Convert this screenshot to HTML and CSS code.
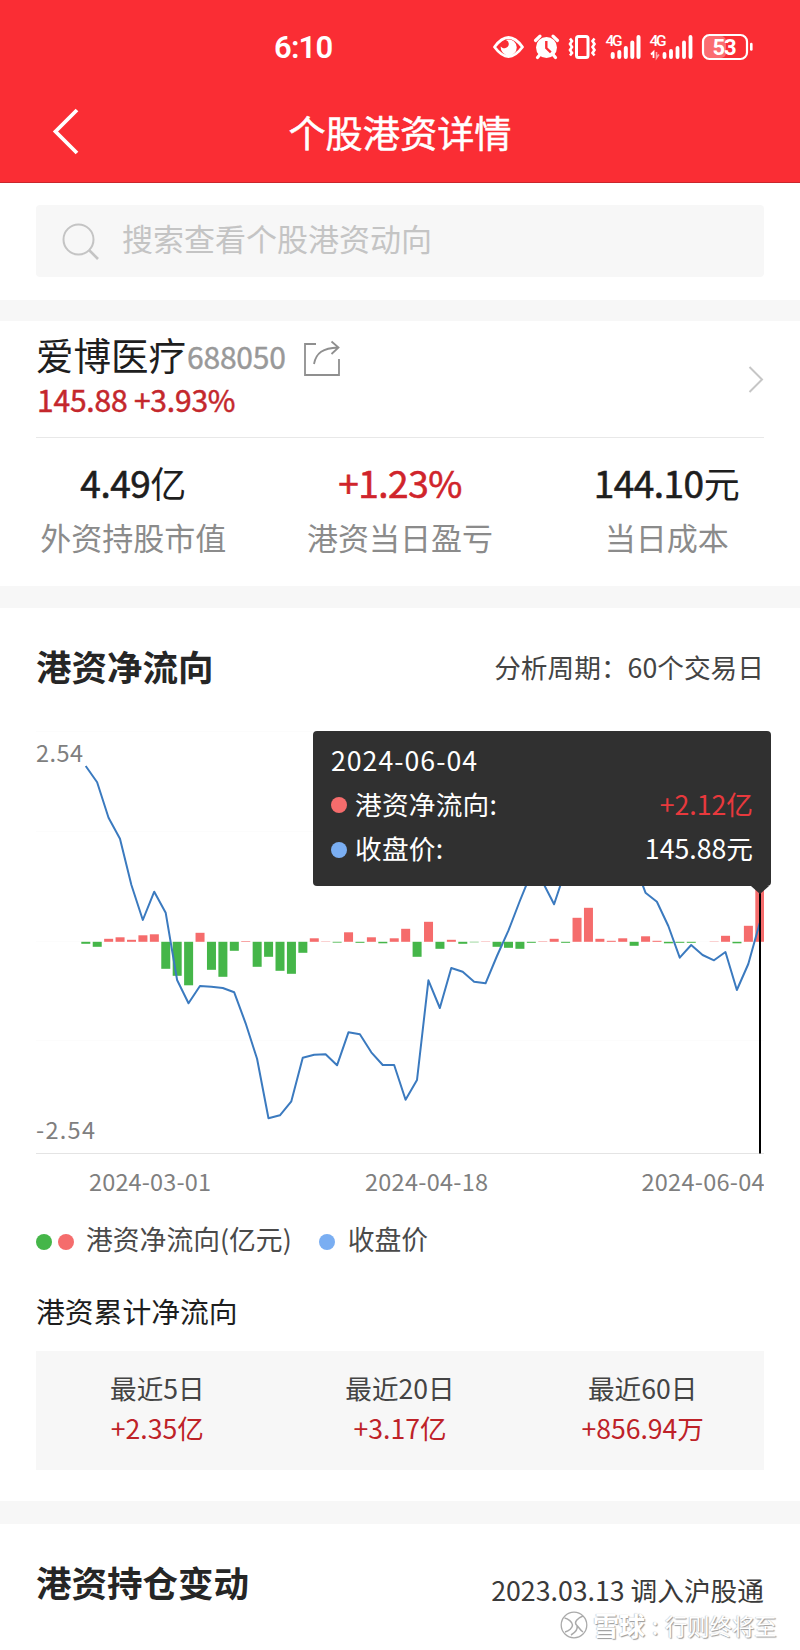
FILE: index.html
```html
<!DOCTYPE html>
<html lang="zh-CN">
<head>
<meta charset="utf-8">
<title>个股港资详情</title>
<link rel="stylesheet" href="styles.css">
</head>
<body>
<header class="header">
  <div class="status">
    <span class="clock">6:10</span>
    <svg class="status-icons" width="262" height="30" viewBox="492 32 262 30">
      <path d="M494.500 47 Q508.500 28 522.500 47 Q508.500 66 494.500 47Z" fill="none" stroke="#fff" stroke-width="2.800" stroke-linejoin="round"/>
      <path d="M508 39.500 A8 8 0 1 1 500.800 46.500 A4.500 4.500 0 0 0 508.500 45.500 A4.500 4.500 0 0 0 506 40Z" fill="#fff"/>
      <circle cx="546.500" cy="47.500" r="10.500" fill="#fff"/>
      <path d="M535.500 40.500 l4.500-4.300 M553 36.200 l4.500 4.300 M540.500 54 l-3 3.500 M552.500 54 l3 3.500" stroke="#fff" stroke-width="3.200" stroke-linecap="round"/>
      <path d="M546.300 41 v7 l4.500 4.300" fill="none" stroke="#fa2d34" stroke-width="2.400"/>
      <rect x="576.500" y="36.500" width="11.500" height="21" rx="2" fill="none" stroke="#fff" stroke-width="3"/>
      <path d="M570 38.500 l2 2.500 -2 3 2 3 -2 3 2 3 -2 2.500 M594.500 38.500 l-2 2.500 2 3 -2 3 2 3 -2 3 2 2.500" fill="none" stroke="#fff" stroke-width="2.600"/>
      <text class="net" x="605.500" y="46" textLength="17">4G</text>
      <path d="M612.700 57V54 M619.300 57V52 M625.800 57V48 M632.300 57V42.500 M638.500 57V37" stroke="#fff" stroke-width="4" stroke-linecap="round"/>
      <text class="net" x="649.500" y="46" textLength="17">4G</text>
      <path d="M651 54.500 l2.500-2.500 v6" fill="none" stroke="#fff" stroke-width="1.800"/>
      <path d="M656.500 52 v6 l2.500-3.500" fill="none" stroke="#fff" stroke-width="1.600" opacity=".6"/>
      <path d="M664.500 57V54 M671 57V51 M677.500 57V48 M684 57V42.500 M690.500 57V37" stroke="#fff" stroke-width="3.800" stroke-linecap="round"/>
      <rect x="704" y="36" width="22" height="22" rx="5" fill="#fff" opacity=".3"/>
      <rect x="703" y="35" width="44" height="24" rx="6.500" fill="none" stroke="#fff" stroke-width="2.200"/>
      <path d="M751.300 44v5.500" stroke="#fff" stroke-width="2.600" stroke-linecap="round"/>
      <text class="battery" x="712.500" y="55" textLength="24">53</text>
    </svg>
  </div>
  <div class="navbar">
    <svg class="back" width="30" height="48" viewBox="0 0 30 48"><path d="M26 3 L4.500 24.500 L26 46" fill="none" stroke="#fff" stroke-width="3.800"/></svg>
    <h1 class="title">个股港资详情</h1>
  </div>
</header>

<div class="search-wrap">
  <div class="search">
    <svg width="38" height="38" viewBox="0 0 38 38" fill="none" stroke="#c4c4c4" stroke-width="2"><circle cx="16.500" cy="17.500" r="15"/><path d="M27 28 L36 37" stroke-width="2.600"/></svg>
    <span>搜索查看个股港资动向</span>
  </div>
</div>

<section class="stock">
  <div class="stock-head">
    <div>
      <div class="stock-line"><span class="name">爱博医疗</span><span class="code">688050</span>
        <svg class="share" width="38" height="38" viewBox="0 0 38 38" fill="none" stroke="#8f8f8f" stroke-width="1.800"><path d="M13 4 H2 V35 H36 V19"/><path d="M11 24 C13 13 20 8 35 7.500 M28.500 1.500 L35.500 7.500 L28.500 14"/></svg>
      </div>
      <div class="price">145.88 +3.93%</div>
    </div>
    <svg class="chevron" width="16" height="28" viewBox="0 0 16 28"><path d="M1.500 2 L14 14.500 L1.500 27" fill="none" stroke="#c6c6c6" stroke-width="2"/></svg>
  </div>
  <div class="stats">
    <div class="stat"><div class="value"><span class="num">4.49</span>亿</div><div class="label">外资持股市值</div></div>
    <div class="stat"><div class="value up"><span class="num">+1.23%</span></div><div class="label">港资当日盈亏</div></div>
    <div class="stat"><div class="value"><span class="num">144.10</span>元</div><div class="label">当日成本</div></div>
  </div>
</section>

<section class="flow">
  <div class="section-head">
    <h2>港资净流向</h2>
    <span class="period">分析周期：60个交易日</span>
  </div>
  <div class="chart">
    <svg class="plot" width="728" height="480" viewBox="36 720 728 480">
      <path d="M36 731.500H764 M36 831.500H764 M36 941.500H764 M36 1040.500H764" stroke="#fcfcfc"/>
      <path d="M36 1153.500H764" stroke="#e4e4e4"/>
      <g id="bars"></g>
      <polyline id="price-line" fill="none" stroke="#3b7abf" stroke-width="2" stroke-linejoin="round"/>
      <path d="M760 880V1153.500" stroke="#000" stroke-width="2"/>
      <g class="axis">
        <text x="36" y="762" textLength="47">2.54</text>
        <text x="36" y="1139" textLength="59">-2.54</text>
        <text x="89" y="1191" textLength="122">2024-03-01</text>
        <text x="365" y="1191" textLength="123">2024-04-18</text>
        <text x="641.500" y="1191" textLength="123">2024-06-04</text>
      </g>
    </svg>
    <div class="tooltip">
      <div class="tip-date">2024-06-04</div>
      <div class="tip-row"><i class="dot red"></i><span>港资净流向:</span><b class="tip-up">+2.12亿</b></div>
      <div class="tip-row"><i class="dot blue"></i><span>收盘价:</span><b>145.88元</b></div>
    </div>
  </div>
  <div class="legend">
    <i class="dot green"></i><i class="dot red"></i><span class="legend-flow">港资净流向(亿元)</span>
    <i class="dot blue"></i><span>收盘价</span>
  </div>
  <h3>港资累计净流向</h3>
  <div class="totals">
    <div>最近5日<b>+2.35亿</b></div>
    <div>最近20日<b>+3.17亿</b></div>
    <div>最近60日<b>+856.94万</b></div>
  </div>
</section>

<section class="holding">
  <h2>港资持仓变动</h2>
  <span class="since">2023.03.13 调入沪股通</span>
</section>

<div class="watermark">
  <svg width="30" height="30" viewBox="0 0 30 30" fill="none"><circle cx="15" cy="15" r="12.800" stroke="#aaa" stroke-width="1.300"/><path d="M5.500 8 C9 8.500 13.500 12 13.500 15 C13.500 18 10 21 6 22 M24 6 C19 8 14 12 18 15.500 C20.500 18 21 20 24 22 M12 25 C17 22 19 19 18 15.500" stroke="#aaa" stroke-width="1.500"/></svg>
  <span class="brand">雪球</span><span class="colon">:</span><span class="author">行则终将至</span>
</div>
<script src="chart.js"></script>
</body>
</html>
```
FILE: styles.css
```css
* { box-sizing: border-box; }
body {
  margin: 0;
  width: 800px;
  height: 1650px;
  overflow: hidden;
  position: relative;
  background: #fff;
  color: #1e1e1e;
  font-family: "Noto Sans CJK SC", sans-serif;
}
h1, h2, h3 { margin: 0; }
svg { display: block; flex: none; }
i, b { font-style: normal; font-weight: 400; }

.header { height: 183px; background: #fa2d34; color: #fff; border-bottom: 1px solid #c9262c; }
.status { height: 80px; padding: 0 46px 0 274px; display: flex; align-items: flex-start; justify-content: space-between; }
.clock { margin-top: 28px; font: 600 31px/40px Roboto, sans-serif; letter-spacing: -0.8px; }
.status-icons { margin-top: 32px; }
.net { font: 500 15.500px Roboto, sans-serif; fill: #fff; }
.battery { font: 700 22px Roboto, sans-serif; fill: #fff; }
.navbar { height: 102px; padding-top: 25px; display: grid; grid-template-columns: 120px 1fr 120px; }
.back { margin: 2px 0 0 51px; }
.title { text-align: center; font-size: 37.200px; line-height: 54px; font-weight: 400; -webkit-text-stroke: 0.500px; }

.search-wrap { height: 117px; padding: 22px 36px; }
.search { height: 72px; padding-left: 26px; display: flex; align-items: center; gap: 22px; background: #f7f7f7; border-radius: 4px; color: #c4c4c4; font-size: 31px; line-height: 68px; }
.search span { margin-top: -6px; }

.stock { height: 308px; border-top: 21px solid #f7f7f7; border-bottom: 22px solid #f7f7f7; }
.stock-head { height: 117px; margin: 0 36px; padding-top: 6px; border-bottom: 1px solid #e8e8e8; display: flex; justify-content: space-between; }
.stock-line { display: flex; height: 53px; }
.name { font-size: 37.500px; line-height: 53px; width: 151px; }
.code { font-size: 30px; line-height: 59px; letter-spacing: -0.200px; color: #999; -webkit-text-stroke: 0.400px; width: 116px; }
.share { margin-top: 13px; }
.price { font-size: 30px; line-height: 38px; padding-left: 1px; -webkit-text-stroke: 0.500px; letter-spacing: -0.200px; color: #c4272c; }
.chevron { margin-top: 38px; }
.stats { display: grid; grid-template-columns: repeat(3, 1fr); text-align: center; padding-top: 18px; }
.value { font-size: 36px; line-height: 52px; height: 54px; }
.value .num { font-size: 37px; -webkit-text-stroke: 0.600px; letter-spacing: -0.500px; }
.value.up { color: #d0242b; }
.label { font-size: 31px; line-height: 54px; color: #8b8b8b; }

.flow { height: 916px; padding: 36px 36px 0; border-bottom: 23px solid #f7f7f7; }
.section-head { height: 76px; display: flex; justify-content: space-between; }
h2 { font-size: 35.500px; line-height: 44px; font-weight: 700; color: #262626; }
.period { font-size: 26.700px; line-height: 46px; color: #444; }
.chart { position: relative; }
.axis text { font-family: "Noto Sans CJK SC", sans-serif; font-size: 23.500px; fill: #7f7f7f; }
.tooltip { position: absolute; left: 277px; top: 10.500px; width: 458px; height: 155.500px; padding: 7px 18px 0; border-radius: 4px; background: #303030; color: #fff; font-size: 26.700px; }
.tooltip::after { content: ""; position: absolute; left: 438px; top: 155px; border: 9px solid transparent; border-top: 8px solid #303030; border-bottom: 0; }
.tip-date { line-height: 44px; letter-spacing: 1px; }
.tip-row { display: flex; align-items: center; line-height: 44.500px; }
.tip-row .dot { margin-top: 3px; }
.tip-row span { margin-left: 8px; letter-spacing: 0.200px; }
.tip-row b { margin-left: auto; }
.tip-up { color: #e8393d; }
.dot { width: 16px; height: 16px; border-radius: 50%; flex: none; }
.red { background: #f56c6c; }
.green { background: #45b649; }
.blue { background: #7aaef2; }
.legend { height: 80px; display: flex; align-items: center; color: #4a4a4a; font-size: 26.800px; }
.legend .dot { margin-top: 3px; }
.legend .red { margin-left: 6px; }
.legend span { margin-top: -4px; }
.legend .legend-flow { margin-left: 12px; margin-right: 27px; }
.legend .blue + span { margin-left: 13px; }
h3 { font-size: 28.800px; line-height: 62px; font-weight: 400; }
.totals { margin-top: 9px; height: 119px; padding-top: 17px; background: #f7f7f7; display: grid; grid-template-columns: repeat(3, 1fr); text-align: center; font-size: 26.600px; line-height: 40px; color: #444; }
.totals b { display: block; color: #be2228; }

.holding { height: 126px; padding: 36px 36px 0; display: flex; justify-content: space-between; align-items: flex-start; }
.since { margin-top: 12px; font-size: 26.700px; line-height: 36px; color: #3a3a3a; }

.watermark { position: absolute; left: 559px; top: 1610px; height: 30px; display: flex; align-items: center; color: #fff; line-height: 28px; text-shadow: 1px 1px 1px #999, -0.500px -0.500px 1px #bbb; }
.brand { margin-left: 4px; font-size: 26px; font-weight: 700; }
.colon { width: 20px; text-align: center; font-size: 24px; }
.author { font-size: 22.300px; }
```
FILE: chart.js
```
const ORIGIN = 86, STEP = 11.424, BASE = 941.8;
const GREEN = '#45b649', RED = '#f56c6c';

// Daily net flow, in chart units: positive rises above the base line.
const flows = [
  -2, -5, 3, 4.5, 2, 6.5, 7.5, -27, -34, -43.5, 9, -28, -35, -9, 0.6, -25, -15, -29, -32, -11,
  3.5, 0.3, -0.8, 9.5, -1, 4.5, -1.5, 3.5, 13, -15, 20, -7, 2, -2, -0.5, 0.3, -5, -6, -7, -1,
  0.4, 3, -1, 24, 34, 3, 1, 3.5, -4, 5.5, 1, -1.5, -1, -1, 0, 0.3, 6, -1.5, 16, 130
];
// Closing price positions.
const closes = [
  766, 782.3, 817.7, 838.7, 885, 920, 891.7, 912.7, 980, 1003.3, 986, 986.7, 988, 992.3, 1023.3,
  1058.7, 1118.3, 1115.3, 1101.3, 1057.7, 1054.7, 1054.3, 1065.3, 1032.3, 1034.3, 1052.3, 1065,
  1065, 1099.7, 1080, 980.3, 1008, 968, 971.7, 981.7, 983.3, 956, 930.7, 901, 873, 882, 904.3,
  870, 850, 845, 850, 845, 850, 862, 892.7, 901.7, 926, 957.7, 945, 955, 960.3, 952, 990, 964, 923
];
const NS = 'http://www.w3.org/2000/svg';
const bars = document.getElementById('bars');
flows.forEach((v, i) => {
  const r = document.createElementNS(NS, 'rect');
  r.setAttribute('x', ORIGIN + i * STEP - 4.7);
  r.setAttribute('width', 9);
  r.setAttribute('y', v > 0 ? BASE - v : BASE);
  r.setAttribute('height', Math.abs(v));
  r.setAttribute('fill', v > 0 ? RED : GREEN);
  bars.appendChild(r);
});
document.getElementById('price-line')
  .setAttribute('points', closes.map((y, i) => `${ORIGIN - 0.3 + i * STEP},${y}`).join(' '));
```
